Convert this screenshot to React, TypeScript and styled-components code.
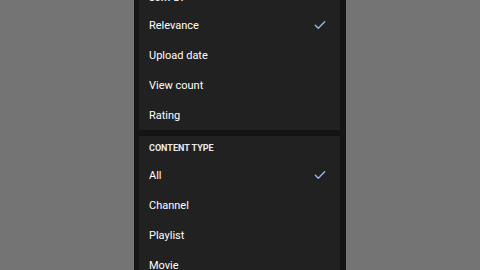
import React from 'react';
import styled, { createGlobalStyle } from 'styled-components';

const GlobalStyle = createGlobalStyle`
  html, body {
    margin: 0;
    padding: 0;
    background: #747474;
    overflow: hidden;
  }
  body {
    font-family: Roboto, "Noto Sans", sans-serif;
    -webkit-font-smoothing: antialiased;
  }
`;

const sections = [
  { title: 'Sort by', items: ['Relevance', 'Upload date', 'View count', 'Rating'], selected: 0 },
  { title: 'Content type', items: ['All', 'Channel', 'Playlist', 'Movie'], selected: 0 },
];

export default function App() {
  return (
    <>
      <GlobalStyle />
      <Page>
        <Sheet>
          {sections.map((section) => (
            <Card key={section.title}>
              <CardTitle>{section.title}</CardTitle>
              {section.items.map((item, index) => (
                <Option key={item}>
                  <OptionLabel>{item}</OptionLabel>
                  {index === section.selected && (
                    <CheckMark viewBox="0 0 24 24">
                      <path d="M4 12.5l5 5L20 6.5" />
                    </CheckMark>
                  )}
                </Option>
              ))}
            </Card>
          ))}
        </Sheet>
      </Page>
    </>
  );
}

const Page = styled.div`
  width: 480px;
  height: 270px;
  display: flex;
  justify-content: center;
  overflow: hidden;
`;

const Sheet = styled.div`
  width: 212px;
  margin-top: -14px;
  padding: 0 6px 0 5px;
  box-sizing: border-box;
  background: #141414;
  display: flex;
  flex-direction: column;
  gap: 6px;
`;

const Card = styled.div`
  background: #212121;
  display: flex;
  flex-direction: column;
`;

const CardTitle = styled.div`
  height: 24px;
  display: flex;
  align-items: center;
  padding-left: 10px;
  font-size: 9px;
  font-weight: 700;
  text-transform: uppercase;
  color: #ececec;
`;

const Option = styled.div`
  height: 30px;
  display: flex;
  align-items: center;
  justify-content: space-between;
  padding: 0 13px 0 10px;
`;

const OptionLabel = styled.span`
  font-size: 11px;
  color: #ffffff;
`;

const CheckMark = styled.svg`
  width: 14px;
  height: 14px;
  fill: none;
  stroke: #93b7e8;
  stroke-width: 2.4;
  stroke-linecap: round;
  stroke-linejoin: round;
`;
